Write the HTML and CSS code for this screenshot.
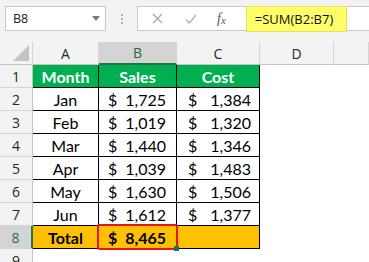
FILE: index.html
```html
<!DOCTYPE html>
<html>
<head>
<meta charset="utf-8">
<link rel="stylesheet" href="styles.css">
</head>
<body>
<div class="bar">
  <div class="namebox"><span>B8</span><svg class="dd" width="8" height="5" viewBox="0 0 8 5"><path d="M0 0H8L4 5Z" fill="#7a7a7a"/></svg></div>
  <div class="dots"><i></i><i></i><i></i></div>
  <div class="fbox">
    <svg class="ico x" width="11" height="11" viewBox="0 0 11 11"><path d="M1 1L10 10M10 1L1 10" stroke="#a8a8a8" stroke-width="1.3" fill="none"/></svg>
    <svg class="ico ok" width="12" height="10" viewBox="0 0 12 10"><path d="M1 5.5L4.5 9L11 1" stroke="#b4b4b4" stroke-width="1.4" fill="none"/></svg>
    <span class="fx">f<span class="fxs">x</span></span>
    <div class="formula">=SUM(B2:B7)</div>
  </div>
</div>
<div class="grid">
  <div class="ch corner"><svg width="16" height="16" viewBox="0 0 16 16"><path d="M16 0V16H0Z" fill="#c3c3c3"/></svg></div>
  <div class="ch">A</div>
  <div class="ch sel">B</div>
  <div class="ch">C</div>
  <div class="ch">D</div>
  <div class="ch last"></div>

  <div class="rh">1</div>
  <div class="c hd">Month</div>
  <div class="c hd">Sales</div>
  <div class="c hd">Cost</div>
  <div class="e"></div><div class="e"></div>

  <div class="rh">2</div>
  <div class="c txt">Jan</div>
  <div class="c cur cb"><span>$</span><span>1,725</span></div>
  <div class="c cur cc"><span>$</span><span>1,384</span></div>
  <div class="e"></div><div class="e"></div>

  <div class="rh">3</div>
  <div class="c txt">Feb</div>
  <div class="c cur cb"><span>$</span><span>1,019</span></div>
  <div class="c cur cc"><span>$</span><span>1,320</span></div>
  <div class="e"></div><div class="e"></div>

  <div class="rh">4</div>
  <div class="c txt">Mar</div>
  <div class="c cur cb"><span>$</span><span>1,440</span></div>
  <div class="c cur cc"><span>$</span><span>1,346</span></div>
  <div class="e"></div><div class="e"></div>

  <div class="rh">5</div>
  <div class="c txt">Apr</div>
  <div class="c cur cb"><span>$</span><span>1,039</span></div>
  <div class="c cur cc"><span>$</span><span>1,483</span></div>
  <div class="e"></div><div class="e"></div>

  <div class="rh">6</div>
  <div class="c txt">May</div>
  <div class="c cur cb"><span>$</span><span>1,630</span></div>
  <div class="c cur cc"><span>$</span><span>1,506</span></div>
  <div class="e"></div><div class="e"></div>

  <div class="rh">7</div>
  <div class="c txt">Jun</div>
  <div class="c cur cb"><span>$</span><span>1,612</span></div>
  <div class="c cur cc"><span>$</span><span>1,377</span></div>
  <div class="e"></div><div class="e"></div>

  <div class="rh sel">8</div>
  <div class="c txt tot">Total</div>
  <div class="c cur cb tot active"><span>$</span><span>8,465</span></div>
  <div class="c tot"></div>
  <div class="e"></div><div class="e"></div>

  <div class="rh">9</div>
  <div class="e"></div><div class="e"></div><div class="e"></div><div class="e"></div><div class="e"></div>
</div>
</body>
</html>
```

FILE: styles.css
```css
body {
  margin: 0;
  width: 369px;
  height: 262px;
  overflow: hidden;
  background: #fff;
  font-family: Lato, "Open Sans", sans-serif;
}

.bar {
  height: 42px;
  box-sizing: border-box;
  padding-top: 6px;
  background: #f3f3f3;
  display: flex;
  align-items: flex-start;
}

.namebox {
  margin-left: 5px;
  width: 101px;
  height: 25px;
  box-sizing: border-box;
  border: 1px solid #c9c9c9;
  background: #fff;
  display: flex;
  align-items: center;
  justify-content: space-between;
  padding: 0 5px 0 7px;
  font: 12.5px "Open Sans", sans-serif;
  color: #222;
}

.dots {
  width: 31px;
  display: flex;
  flex-direction: column;
  align-items: center;
  gap: 2px;
  padding-top: 8px;
}

.dots i {
  display: block;
  width: 2px;
  height: 2px;
  background: #b0b0b0;
}

.fbox {
  flex: 1;
  height: 25px;
  box-sizing: border-box;
  border: 1px solid #c9c9c9;
  border-right: none;
  background: #fff;
  display: flex;
  align-items: center;
}

.ico.x { margin-left: 14px; }
.ico.ok { margin-left: 22px; }

.fx {
  margin-left: 20px;
  font: italic 14px "Liberation Serif", serif;
  color: #555;
}

.fxs {
  font-size: 11px;
  position: relative;
  top: 1px;
}

.formula {
  margin-left: 20px;
  width: 101px;
  height: 26px;
  box-sizing: border-box;
  margin-top: 1px;
  background: #ffff6b;
  border: 1px solid #eadf55;
  display: flex;
  align-items: center;
  padding-left: 8px;
  font: 13px "Open Sans", sans-serif;
  color: #111;
}

.grid {
  display: grid;
  grid-template-columns: 33px 66px 78px 83px 74px 1fr;
  grid-auto-rows: 23px;
}

.ch {
  background: #f3f3f3;
  border-right: 1px solid #d5d5d5;
  border-bottom: 1px solid #c4c4c4;
  display: flex;
  align-items: center;
  justify-content: center;
  font: 14px "Open Sans", sans-serif;
  color: #262626;
}

.ch.corner {
  align-items: flex-end;
  justify-content: flex-end;
  padding: 0 3px 3px 0;
}

.ch.sel {
  background: #d4d4d4;
  color: #1f6b42;
  border-bottom: 2px solid #217346;
}

.rh {
  background: #f3f3f3;
  border-right: 1px solid #c4c4c4;
  border-bottom: 1px solid #d5d5d5;
  display: flex;
  align-items: center;
  justify-content: center;
  font: 14px "Open Sans", sans-serif;
  color: #262626;
}

.rh.sel {
  background: #d4d4d4;
  color: #217346;
  border-right: 2px solid #217346;
}

.c {
  border-right: 1px solid #000;
  border-bottom: 1px solid #000;
  display: flex;
  align-items: center;
  font-size: 16px;
  color: #000;
}

.hd {
  background: #00b050;
  color: #fff;
  font-weight: bold;
  justify-content: center;
}

.txt { justify-content: center; }

.cur { justify-content: space-between; }
.cb { padding: 0 10px 0 9px; }
.cc { padding: 0 8px 0 11px; }

.tot {
  background: #ffc000;
  font-weight: bold;
}

.active { position: relative; }

.active::after {
  content: "";
  position: absolute;
  left: -2px;
  top: -2px;
  right: -2px;
  bottom: -2px;
  border: 2px solid #e8141b;
  border-radius: 3px;
}

.active::before {
  content: "";
  position: absolute;
  right: -3px;
  bottom: -3px;
  width: 5px;
  height: 5px;
  background: #217346;
  z-index: 1;
}
```
